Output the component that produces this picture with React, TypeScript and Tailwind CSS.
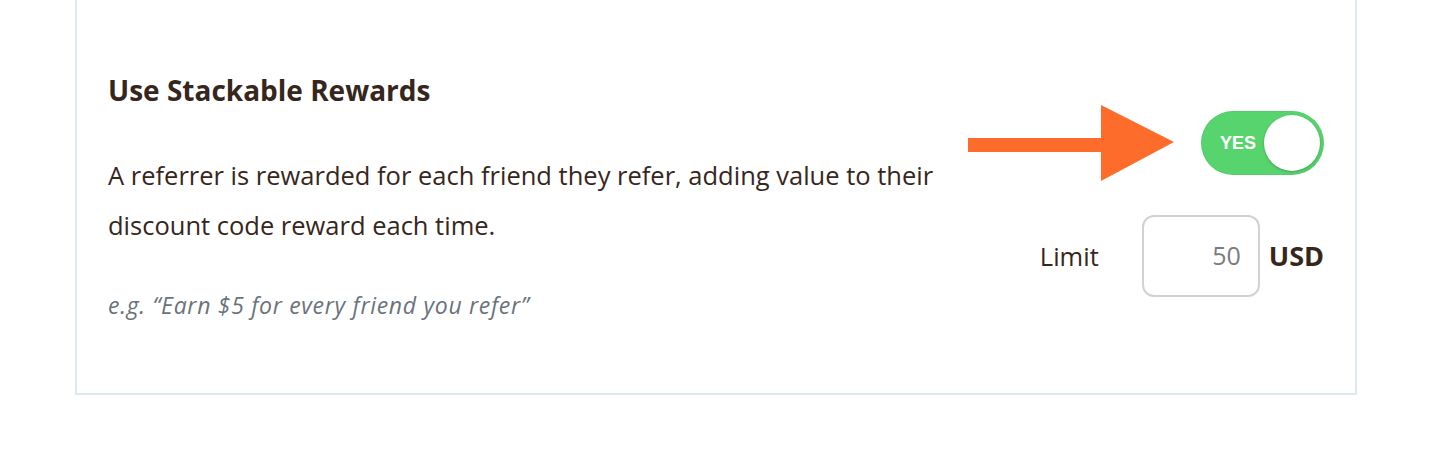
import React from "react";

const font = { fontFamily: "'Open Sans', 'Noto Sans', sans-serif" };

function Arrow() {
  return (
    <svg width="206" height="76" viewBox="0 0 206 76" className="block">
      <rect x="0" y="33" width="134" height="14" fill="#fd6c2b" />
      <polygon points="133,0 206,37 133,76" fill="#fd6c2b" />
    </svg>
  );
}

function Toggle() {
  return (
    <div className="relative flex h-[64px] w-[123px] items-center rounded-full bg-[#58d46f] shadow-[inset_0_0_0_1px_rgba(0,0,0,0.04)]">
      <span className="pl-[19px] text-[18px] font-bold text-white [font-family:'Liberation_Sans',Arial,sans-serif]">
        YES
      </span>
      <span className="absolute right-[4px] top-[4px] h-[56px] w-[56px] rounded-full bg-white shadow-[0_1px_3px_rgba(0,0,0,0.25)]" />
    </div>
  );
}

export default function App() {
  return (
    <div className="h-[450px] w-[1454px] bg-white pl-[75px] pr-[97px]" style={font}>
      <div className="flex h-[395px] justify-between border-x-2 border-b-2 border-[#dde8ee] pl-[31px] pr-[31px] text-[#36271d]">
        <div className="pt-[74px]">
          <h2 className="text-[28px] font-bold leading-[32px]">Use Stackable Rewards</h2>
          <p className="mt-[44px] w-[850px] text-[25.5px] leading-[50px]">
            A referrer is rewarded for each friend they refer, adding value to their
            discount code reward each time.
          </p>
          <p className="mt-[40px] text-[23px] italic leading-[30px] tracking-[0.7px] text-[#6a737c]">
            e.g. “Earn $5 for every friend you refer”
          </p>
        </div>
        <div className="flex flex-col items-end pt-[105px]">
          <div className="flex items-center gap-[27px]">
            <Arrow />
            <Toggle />
          </div>
          <div className="mt-[34px] flex items-center">
            <span className="text-[25.5px]">Limit</span>
            <div className="ml-[43px] flex h-[82px] w-[118px] items-center justify-end rounded-[12px] border-2 border-[#cfd3d6] pr-[17px] text-[25px] text-[#7c7c7c]">
              50
            </div>
            <span className="ml-[9px] text-[27px] font-bold">USD</span>
          </div>
        </div>
      </div>
    </div>
  );
}
